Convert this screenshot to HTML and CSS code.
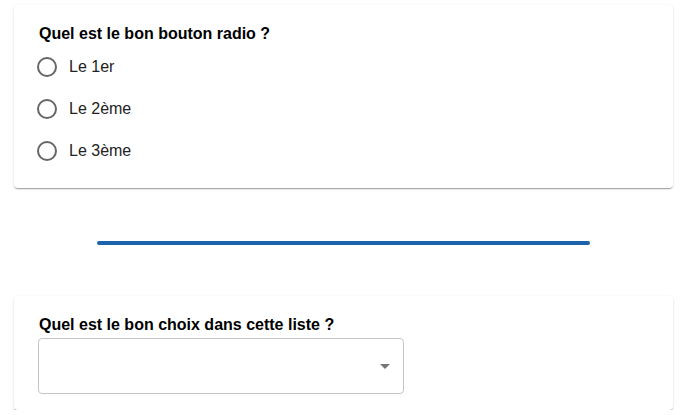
FILE: index.html
```html
<!DOCTYPE html>
<html lang="fr">
<head>
<meta charset="utf-8">
<title>Questions</title>
<link rel="stylesheet" href="styles.css">
</head>
<body>
<main class="page">
  <section class="card card-radio">
    <h2 class="question">Quel est le bon bouton radio ?</h2>
    <div class="radio-group">
      <label class="radio-row">
        <svg class="radio-icon" width="24" height="24" viewBox="0 0 24 24"><circle cx="12" cy="12" r="9" fill="none" stroke="#666" stroke-width="2"/></svg>
        <span class="radio-label">Le 1er</span>
      </label>
      <label class="radio-row">
        <svg class="radio-icon" width="24" height="24" viewBox="0 0 24 24"><circle cx="12" cy="12" r="9" fill="none" stroke="#666" stroke-width="2"/></svg>
        <span class="radio-label">Le 2ème</span>
      </label>
      <label class="radio-row">
        <svg class="radio-icon" width="24" height="24" viewBox="0 0 24 24"><circle cx="12" cy="12" r="9" fill="none" stroke="#666" stroke-width="2"/></svg>
        <span class="radio-label">Le 3ème</span>
      </label>
    </div>
  </section>

  <div class="separator"></div>

  <section class="card card-select">
    <h2 class="question">Quel est le bon choix dans cette liste ?</h2>
    <div class="select-box">
      <svg class="select-arrow" width="24" height="24" viewBox="0 0 24 24"><path d="M7 10l5 5 5-5z" fill="#757575"/></svg>
    </div>
  </section>
</main>
</body>
</html>
```

FILE: styles.css
```css
html, body {
  margin: 0;
  padding: 0;
  background: #fff;
}
body {
  font-family: "Liberation Sans", Arial, sans-serif;
  color: #000;
}
.page {
  padding: 5px 12px 0 14px;
  display: flex;
  flex-direction: column;
}
.card {
  background: #fff;
  border-radius: 4px;
  box-shadow: 0 2px 1px -1px rgba(0,0,0,0.2), 0 1px 1px 0 rgba(0,0,0,0.14), 0 1px 3px 0 rgba(0,0,0,0.12);
  padding: 20px 24px 16px 24px;
  display: flex;
  flex-direction: column;
}
.question {
  margin: 0 0 0 1px;
  font-size: 16px;
  font-weight: bold;
  line-height: 18px;
}
.radio-group {
  display: flex;
  flex-direction: column;
  margin-top: 3px;
}
.radio-row {
  display: flex;
  align-items: center;
  height: 42px;
}
.radio-icon {
  margin-left: -3px;
  margin-right: 10px;
  flex: none;
}
.radio-label {
  font-size: 16px;
  color: #222;
}
.separator {
  align-self: center;
  width: 493px;
  height: 4px;
  border-radius: 2px;
  background: #1b63ab;
  margin: 53px 0 51px 0;
}
.card-select .question {
  margin-bottom: 4px;
}
.select-box {
  width: 366px;
  height: 56px;
  box-sizing: border-box;
  border: 1px solid #c4c4c4;
  border-radius: 4px;
  display: flex;
  align-items: center;
  justify-content: flex-end;
  padding-right: 6px;
}
.select-arrow {
  margin-top: -1px;
}
```
